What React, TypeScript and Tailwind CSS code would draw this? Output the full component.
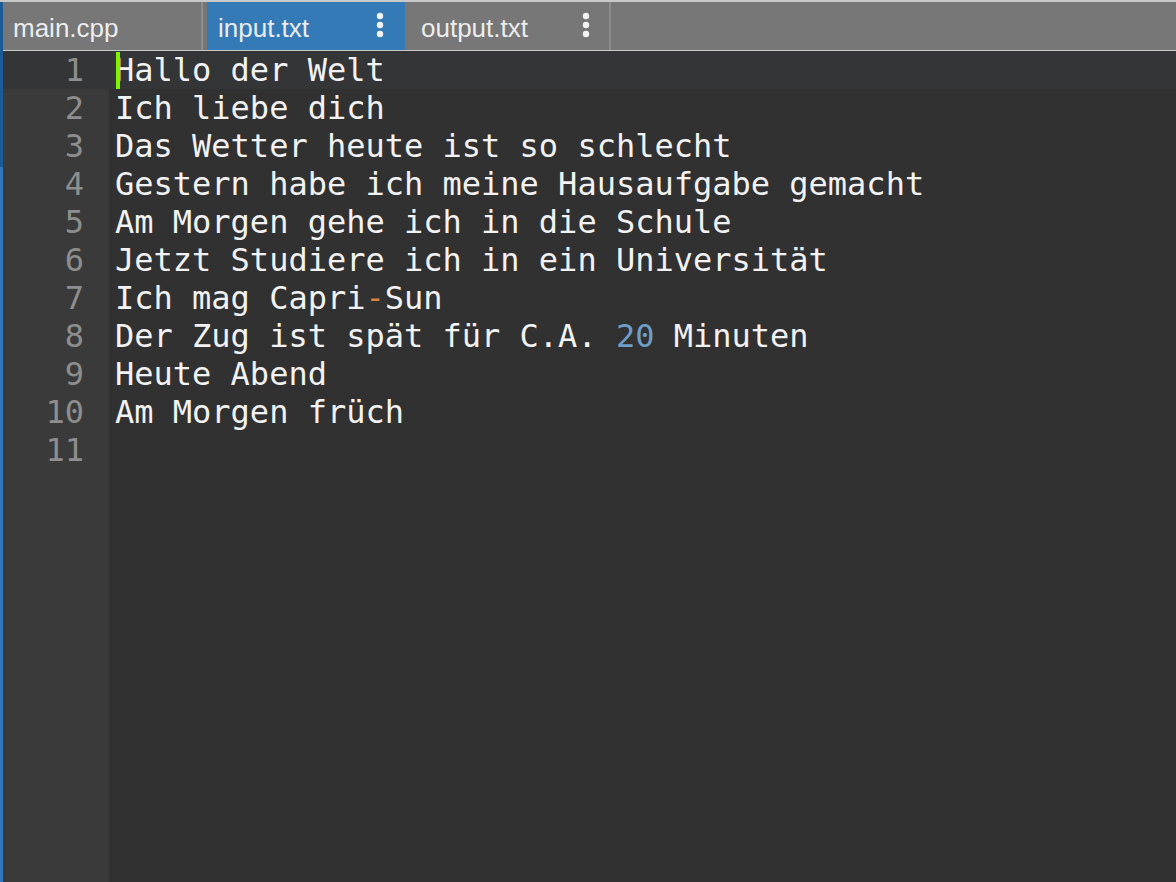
import React from "react";

const lines: React.ReactNode[] = [
  "Hallo der Welt",
  "Ich liebe dich",
  "Das Wetter heute ist so schlecht",
  "Gestern habe ich meine Hausaufgabe gemacht",
  "Am Morgen gehe ich in die Schule",
  "Jetzt Studiere ich in ein Universität",
  <>
    Ich mag Capri<span className="text-[#d9843a]">-</span>Sun
  </>,
  <>
    Der Zug ist spät für C.A. <span className="text-[#6e9fc8]">20</span> Minuten
  </>,
  "Heute Abend",
  "Am Morgen früch",
  "",
];

function Dots() {
  return (
    <svg width="8" height="28" viewBox="0 0 8 28" className="block">
      <circle cx="4" cy="4" r="3.2" fill="#f4f4f4" />
      <circle cx="4" cy="13" r="3.2" fill="#f4f4f4" />
      <circle cx="4" cy="22" r="3.2" fill="#f4f4f4" />
    </svg>
  );
}

export default function App() {
  return (
    <div className="w-[1176px] h-[882px] flex flex-col bg-[#313131] overflow-hidden">
      <div className="h-[2px] bg-[#c9c9c9] shrink-0" />
      <div className="flex flex-1 min-h-0">
        <div className="w-[3px] shrink-0 flex flex-col">
          <div className="h-[165px] bg-[#1c5b98]" />
          <div className="flex-1 bg-[#3278bd]" />
        </div>
        <div className="flex-1 flex flex-col min-w-0">
          <div
            className="h-[49px] shrink-0 flex bg-[#777777] border-b border-[#c8c8c8] text-[26px] text-[#ececec]"
            style={{ fontFamily: '"Liberation Sans", Arial, sans-serif' }}
          >
            <div className="w-[200px] flex items-center pl-[10px] border-r-2 border-[#8d8d8d]">
              <span className="leading-none pt-[4px]">main.cpp</span>
            </div>
            <div className="w-[4px]" />
            <div className="w-[198px] flex items-center justify-between pl-[11px] pr-[21px] bg-[#337ab7]">
              <span className="leading-none pt-[4px]">input.txt</span>
              <Dots />
            </div>
            <div className="w-[206px] flex items-center justify-between pl-[16px] pr-[19px] border-r-2 border-[#8d8d8d]">
              <span className="leading-none pt-[4px]">output.txt</span>
              <Dots />
            </div>
          </div>
          <div
            className="flex-1 flex text-[32px] leading-[38px]"
            style={{ fontFamily: '"DejaVu Sans Mono", monospace' }}
          >
            <div className="w-[106px] shrink-0 bg-[#3a3a3a] text-[#8e8e8e] text-right">
              {lines.map((_, i) => (
                <div
                  key={i}
                  className={`h-[38px] pr-[25px] ${i === 0 ? "bg-[#343537]" : ""}`}
                >
                  {i + 1}
                </div>
              ))}
            </div>
            <div className="flex-1 text-[#f2f2f2] whitespace-pre">
              {lines.map((l, i) => (
                <div
                  key={i}
                  className={`relative h-[38px] pl-[6px] ${i === 0 ? "bg-[#343537]" : ""}`}
                >
                  {l}
                  {i === 0 && (
                    <span className="absolute z-10 left-[7px] top-[1px] w-[4px] h-[37px] bg-[#7ef500]" />
                  )}
                </div>
              ))}
            </div>
          </div>
        </div>
      </div>
    </div>
  );
}
